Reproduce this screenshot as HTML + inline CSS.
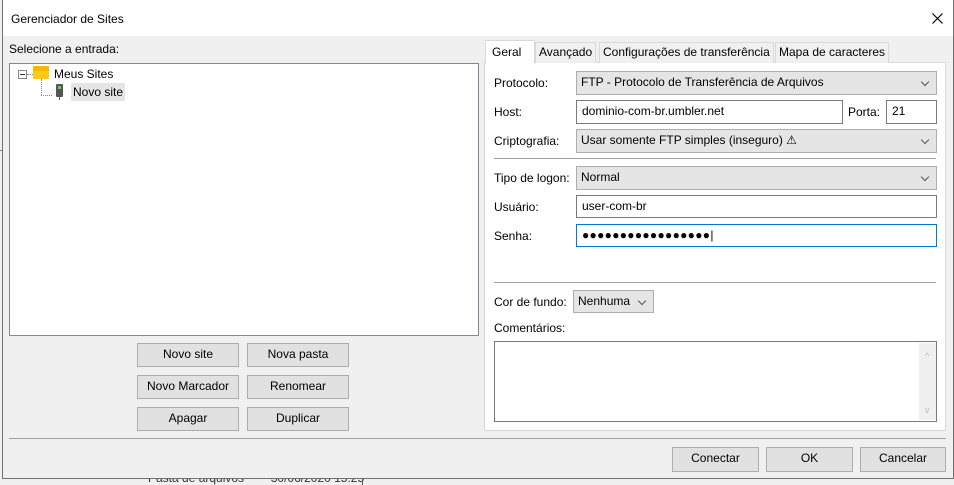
<!DOCTYPE html><html><head><style>
*{box-sizing:border-box;margin:0;padding:0}
body{width:954px;height:485px;background:#f0f0f0;font:12px "Liberation Sans",sans-serif;color:#000;position:relative;overflow:hidden}
.a{position:absolute}
.win{left:2px;top:0;width:952px;height:479px;border:1px solid #707070;border-top:none;background:#f0f0f0}
.btn{position:absolute;background:#e1e1e1;border:1px solid #adadad;text-align:center;line-height:21px}
.dd{position:absolute;background:#e5e5e5;border:1px solid #adadad;padding-left:4px;line-height:21px}
.dd:after{content:"";position:absolute;right:8px;top:7px;width:5px;height:5px;border-right:1px solid #555;border-bottom:1px solid #555;transform:rotate(45deg)}
.in{position:absolute;background:#fff;border:1px solid #7a7a7a;padding-left:5px;line-height:21px}
.sep{position:absolute;height:1px;background:#a0a0a0}
.tab{position:absolute;top:42px;height:21px;border:1px solid #d9d9d9;border-bottom:none;background:#f0f0f0;line-height:19px;padding:0 3px}
</style></head><body>
<div class="a" style="left:0;top:150px;width:3px;height:1px;background:#888"></div>
<div class="a" style="left:148px;top:471px;color:#333">Pasta de arquivos&nbsp;&nbsp;&nbsp;&nbsp;&nbsp;&nbsp;&nbsp;&nbsp;30/06/2020 15:25</div>
<div class="a" style="left:362px;top:479px;width:1px;height:6px;background:#555"></div>
<div class="a win"></div>
<div class="a" style="left:3px;top:0;width:950px;height:36px;background:#fff"></div>
<div class="a" style="left:11px;top:12px">Gerenciador de Sites</div>
<svg class="a" style="left:932px;top:13px" width="11" height="11"><path d="M0.5 0.5L10.5 10.5M10.5 0.5L0.5 10.5" stroke="#000" stroke-width="1.2"/></svg>
<div class="a" style="left:9px;top:42px">Selecione a entrada:</div>
<div class="a" style="left:9px;top:63px;width:470px;height:273px;background:#fff;border:1px solid #828790"></div>
<div class="a" style="left:18px;top:70px;width:9px;height:9px;border:1px solid #888;background:#fff"></div>
<div class="a" style="left:20px;top:74px;width:5px;height:1px;background:#333"></div>
<div class="a" style="left:27px;top:74px;width:6px;border-top:1px dotted #888"></div>
<div class="a" style="left:41px;top:79px;height:16px;border-left:1px dotted #888"></div>
<div class="a" style="left:41px;top:95px;width:11px;border-top:1px dotted #888"></div>
<div class="a" style="left:33px;top:66px;width:16px;height:13px;background:#f5b800;border-radius:1px"></div>
<div class="a" style="left:33px;top:71px;width:16px;height:8px;background:#fcc91e"></div>
<div class="a" style="left:54px;top:67px">Meus Sites</div>
<div class="a" style="left:71px;top:83px;width:54px;height:18px;background:#e5e5e5"></div>
<div class="a" style="left:56px;top:84px;width:7px;height:13px;background:#555;border-radius:1px"></div>
<div class="a" style="left:58px;top:86px;width:3px;height:3px;background:#6c6"></div>
<div class="a" style="left:59px;top:97px;width:1px;height:3px;background:#555"></div>
<div class="a" style="left:73px;top:85px">Novo site</div>
<div class="btn" style="left:137px;top:343px;width:102px;height:24px">Novo site</div>
<div class="btn" style="left:247px;top:343px;width:102px;height:24px">Nova pasta</div>
<div class="btn" style="left:137px;top:375px;width:102px;height:24px">Novo Marcador</div>
<div class="btn" style="left:247px;top:375px;width:102px;height:24px">Renomear</div>
<div class="btn" style="left:137px;top:407px;width:102px;height:24px">Apagar</div>
<div class="btn" style="left:247px;top:407px;width:102px;height:24px">Duplicar</div>
<div class="sep" style="left:9px;top:438px;width:937px"></div>
<div class="a" style="left:484px;top:62px;width:462px;height:369px;background:#fff;border:1px solid #d9d9d9"></div>
<div class="tab" style="left:535px">Avançado</div>
<div class="tab" style="left:599px">Configurações de transferência</div>
<div class="tab" style="left:775px">Mapa de caracteres</div>
<div class="tab" style="left:485px;top:40px;height:24px;background:#fff;width:50px;padding:0 6px;line-height:22px">Geral</div>
<div class="a" style="left:494px;top:76px">Protocolo:</div>
<div class="dd" style="left:576px;top:71px;width:361px;height:24px">FTP - Protocolo de Transferência de Arquivos</div>
<div class="a" style="left:494px;top:105px">Host:</div>
<div class="in" style="left:576px;top:100px;width:267px;height:24px">dominio-com-br.umbler.net</div>
<div class="a" style="left:848px;top:105px">Porta:</div>
<div class="in" style="left:886px;top:100px;width:51px;height:24px">21</div>
<div class="a" style="left:494px;top:134px">Criptografia:</div>
<div class="dd" style="left:576px;top:129px;width:361px;height:24px">Usar somente FTP simples (inseguro) ⚠</div>
<div class="sep" style="left:494px;top:158px;width:442px"></div>
<div class="a" style="left:494px;top:171px">Tipo de logon:</div>
<div class="dd" style="left:576px;top:166px;width:361px;height:24px">Normal</div>
<div class="a" style="left:494px;top:200px">Usuário:</div>
<div class="in" style="left:576px;top:195px;width:361px;height:23px">user-com-br</div>
<div class="a" style="left:494px;top:229px">Senha:</div>
<div class="in" style="left:576px;top:224px;width:361px;height:23px;border-color:#0078d7;letter-spacing:0.3px;font-size:12px">●●●●●●●●●●●●●●●●●|</div>
<div class="sep" style="left:494px;top:282px;width:442px"></div>
<div class="a" style="left:494px;top:295px">Cor de fundo:</div>
<div class="dd" style="left:573px;top:290px;width:81px;height:23px">Nenhuma</div>
<div class="a" style="left:494px;top:321px">Comentários:</div>
<div class="a" style="left:494px;top:341px;width:443px;height:81px;border:1px solid #7a7a7a;background:#fff"></div>
<div class="a" style="left:919px;top:343px;width:17px;height:77px;background:#f0f0f0"></div>
<div class="a" style="left:925px;top:351px;font-size:9px;color:#bbb">^</div>
<div class="a" style="left:925px;top:405px;font-size:9px;color:#bbb">v</div>
<div class="btn" style="left:672px;top:447px;width:87px;height:25px">Conectar</div>
<div class="btn" style="left:766px;top:447px;width:87px;height:25px">OK</div>
<div class="btn" style="left:860px;top:447px;width:86px;height:25px">Cancelar</div>
</body></html>
